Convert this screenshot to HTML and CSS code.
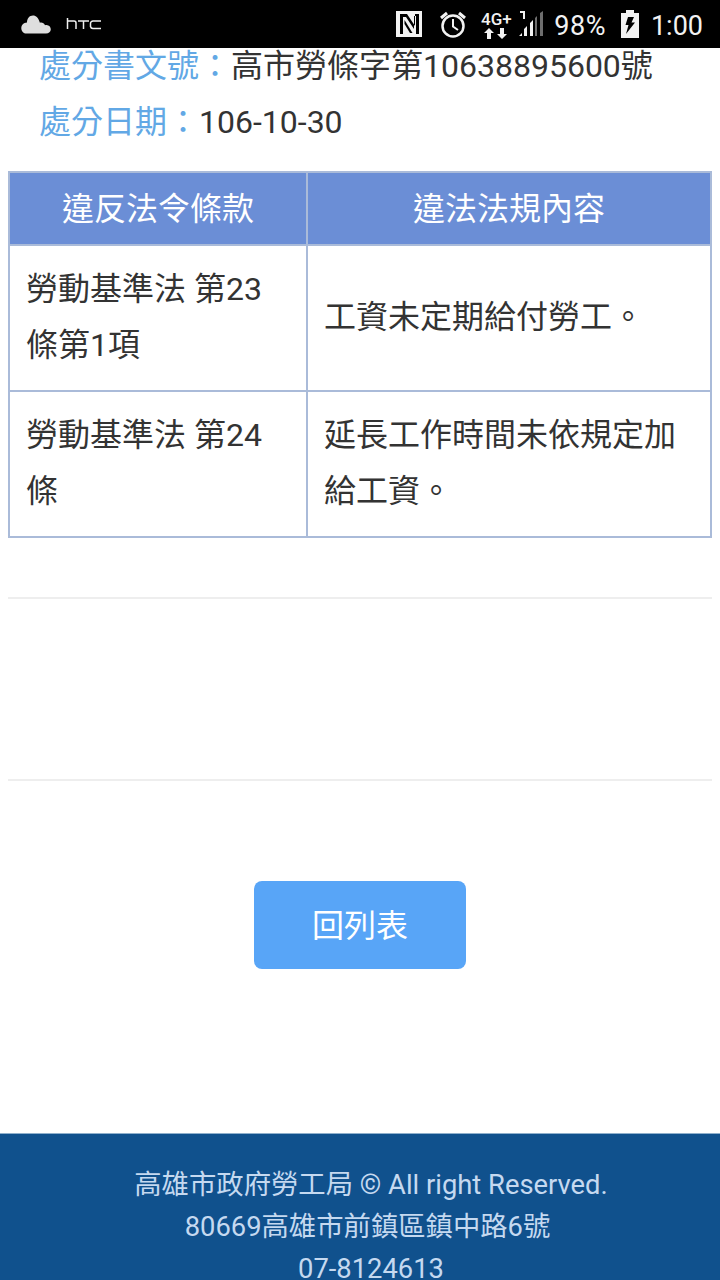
FILE: index.html
```html
<!DOCTYPE html>
<html lang="zh-Hant">
<head>
<meta charset="utf-8">
<title>處分</title>
<link rel="stylesheet" href="styles.css">
</head>
<body>
<div class="page">
  <div class="status">
    <div class="status-left">
      <svg class="cloud" width="30" height="19" viewBox="0 0 30 19"><path fill="#dedede" d="M5.500 18.500h19.500c2.800 0 4.800-1.800 4.800-4.200 0-2.400-1.800-4.200-4.200-4.300-.6 0-1.100 0-1.600.2-.9-2.100-3-3-5.100-2.500C17.500 3 15 .5 12 .5 8.500.5 6 3.300 6 7.500 2.600 7.800.3 10 .3 13.200c0 3 2.300 5.300 5.200 5.300z"/></svg>
      <svg class="logo" width="36" height="12" viewBox="0 0 36 12" fill="none" stroke="#f0f0f0" stroke-width="1.500"><path d="M1.500 0v11M1.500 3h6.500a2 2 0 0 1 2 2v6"/><path d="M12 3h11M17.500 3v8"/><path d="M35 3h-8a2.500 2.500 0 0 0-2.500 2.500v3A2.500 2.500 0 0 0 27 10.500h8"/></svg>
    </div>
    <div class="status-right">
      <svg class="nfc" width="26" height="26" viewBox="0 0 26 26"><rect width="26" height="26" fill="#f2f2f2"/><path fill="#000" d="M4 3h7l8 12V3h4v20h-3V5h-2v13L10 6H7v17H4z"/><path fill="#000" d="M8.500 9l8 13h-2.500l-5.500-9z"/></svg>
      <svg class="alarm" width="30" height="30" viewBox="0 0 30 30" fill="none" stroke="#f2f2f2" stroke-width="2.500"><circle cx="15" cy="17" r="10.500"/><path d="M15 10v7.500l5 3.500" stroke-width="2"/><path d="M3 9l6-5M27 9l-6-5" stroke-width="3"/></svg>
      <div class="net">
        <span class="net-label">4G+</span>
        <svg width="24" height="11" viewBox="0 0 24 11" fill="#f2f2f2"><path d="M5 0l5 5H7v6H3V5H0zM18 11l-5-5h3V0h4v6h3z"/></svg>
      </div>
      <svg class="signal" width="26" height="28" viewBox="0 0 26 28"><path fill="#f2f2f2" d="M2 1h5v8H5V3H2z"/><path fill="#f2f2f2" d="M1 26l3-3v3zM6 26v-7l3-3v10zM12 26V13l3-3v16z"/><path fill="#6e6e6e" d="M17 26V8l2-2v20zM22 26V3l3-2v25z"/></svg>
      <span class="pct">98%</span>
      <svg class="battery" width="20" height="28" viewBox="0 0 20 28"><path fill="#f2f2f2" d="M6 0h8v3h5v25H1V3h5z"/><path fill="#000" d="M8 7h6l-2.500 5.500H15L6 24l2.500-9H5.500z"/></svg>
      <span class="clock">1:00</span>
    </div>
  </div>

  <main class="content">
    <p class="field"><span class="field-label">處分書文號：</span>高市勞條字第10638895600號</p>
    <p class="field"><span class="field-label">處分日期：</span>106-10-30</p>

    <table class="law">
      <colgroup><col class="col-a"><col class="col-b"></colgroup>
      <thead>
        <tr><th>違反法令條款</th><th>違法法規內容</th></tr>
      </thead>
      <tbody>
        <tr><td>勞動基準法 第23條第1項</td><td>工資未定期給付勞工。</td></tr>
        <tr><td>勞動基準法 第24條</td><td>延長工作時間未依規定加給工資。</td></tr>
      </tbody>
    </table>

    <hr class="rule rule-first">
    <hr class="rule rule-second">

    <div class="actions"><a class="back" href="#">回列表</a></div>
  </main>

  <footer class="foot">
    <div>高雄市政府勞工局 © All right Reserved.</div>
    <div class="foot-addr">80669高雄市前鎮區鎮中路6號</div>
    <div>07-8124613</div>
  </footer>
</div>
</body>
</html>
```

FILE: styles.css
```css
* { box-sizing: border-box; }
html, body { margin: 0; padding: 0; }
body {
  font-family: Roboto, "Noto Sans CJK TC", sans-serif;
  color: #333;
  background: #fff;
}
.page {
  position: relative;
  width: 720px;
  height: 1280px;
  overflow: hidden;
  display: flex;
  flex-direction: column;
}
.status {
  position: absolute;
  top: 0;
  left: 0;
  width: 720px;
  height: 48px;
  background: #000;
  color: #f2f2f2;
  display: flex;
  align-items: center;
  justify-content: space-between;
  padding: 0 17px 0 21px;
  z-index: 2;
}
.status-left { display: flex; align-items: center; gap: 15px; }
.status-right { display: flex; align-items: center; }
.nfc { margin-right: 16px; }
.alarm { margin-right: 13px; }
.net { display: flex; flex-direction: column; align-items: center; width: 30px; margin-right: 7px; margin-top: 2px; }
.net-label { font-size: 17px; font-weight: 500; line-height: 15px; margin-bottom: 1px; }
.signal { margin-right: 10px; }
.pct { font-size: 27px; line-height: 30px; letter-spacing: .5px; margin-right: 14px; padding-top: 3px; }
.battery { margin-right: 11px; margin-top: -1px; }
.clock { font-size: 27px; line-height: 30px; padding-top: 3px; }

.content { flex: 1; padding: 38px 8px 0; }
.field { margin: 0; padding-left: 31px; font-size: 32px; line-height: 56px; color: #333; white-space: nowrap; }
.field-label { color: #62a8e5; }

.law {
  width: 702px;
  margin-top: 21px;
  border-collapse: collapse;
  table-layout: fixed;
  font-size: 32px;
  line-height: 56px;
}
.col-a { width: 298px; }
.col-b { width: 404px; }
.law th, .law td { border: 2px solid #aabbd9; }
.law th {
  height: 73px;
  padding: 0;
  background: #6b8ed6;
  color: #fff;
  font-weight: 400;
  text-align: center;
}
.law td {
  height: 146px;
  padding: 15px 16px 17px;
  color: #333;
  text-align: left;
  vertical-align: middle;
}

.rule { margin: 0; border: 0; border-top: 2px solid #eee; }
.rule-first { margin-top: 59px; }
.rule-second { margin-top: 180px; }

.actions { display: flex; justify-content: center; margin-top: 100px; }
.back {
  width: 212px;
  height: 88px;
  display: flex;
  align-items: center;
  justify-content: center;
  padding-bottom: 4px;
  background: #58a5f7;
  border-radius: 8px;
  color: #fff;
  font-size: 32px;
  text-decoration: none;
}

.foot {
  flex: none;
  height: 147px;
  padding-top: 30px;
  padding-left: 22px;
  background: #10518d;
  border-top: 1px solid #8fb0cc;
  color: #c5d9f0;
  font-size: 27.35px;
  line-height: 42px;
  text-align: center;
}
.foot-addr { padding-right: 7px; }
```
